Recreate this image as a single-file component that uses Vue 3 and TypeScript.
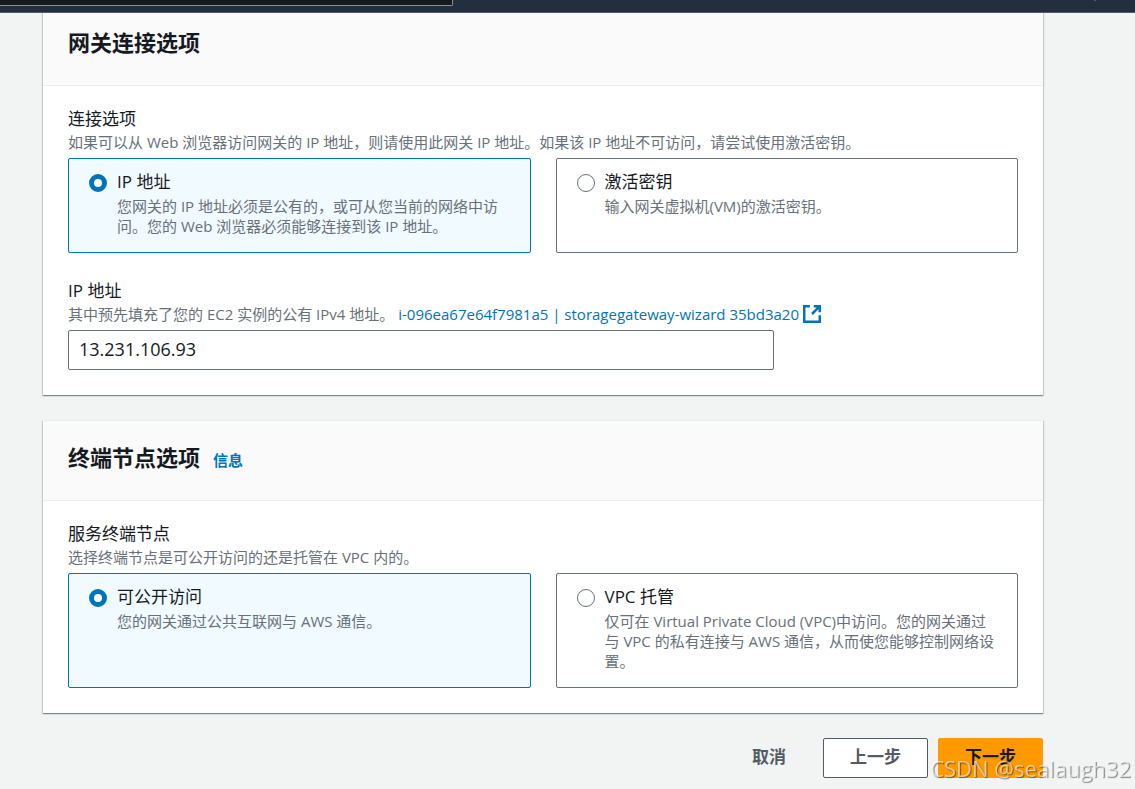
<script setup lang="ts">
import { ref } from 'vue'

interface Tile {
  value: string
  title: string
  description: string
}

const connectionTiles: Tile[] = [
  {
    value: 'ip',
    title: 'IP 地址',
    description: '您网关的 IP 地址必须是公有的，或可从您当前的网络中访问。您的 Web 浏览器必须能够连接到该 IP 地址。',
  },
  { value: 'key', title: '激活密钥', description: '输入网关虚拟机(VM)的激活密钥。' },
]

const endpointTiles: Tile[] = [
  { value: 'public', title: '可公开访问', description: '您的网关通过公共互联网与 AWS 通信。' },
  {
    value: 'vpc',
    title: 'VPC 托管',
    description: '仅可在 Virtual Private Cloud (VPC)中访问。您的网关通过与 VPC 的私有连接与 AWS 通信，从而使您能够控制网络设置。',
  },
]

const connection = ref('ip')
const endpoint = ref('public')
const ipAddress = ref('13.231.106.93')
</script>

<template>
  <div class="page">
    <header class="topbar">
      <div class="search"></div>
      <span class="caret"></span>
    </header>

    <main class="content">
      <section class="card">
        <div class="card-header">
          <h2>网关连接选项</h2>
        </div>
        <div class="card-body">
          <div class="field" role="radiogroup" aria-labelledby="connection-label">
            <span id="connection-label" class="label">连接选项</span>
            <p class="hint">如果可以从 Web 浏览器访问网关的 IP 地址，则请使用此网关 IP 地址。如果该 IP 地址不可访问，请尝试使用激活密钥。</p>
            <div class="tiles">
              <label v-for="tile in connectionTiles" :key="tile.value" class="tile" :class="{ selected: connection === tile.value }">
                <input v-model="connection" type="radio" name="connection" :value="tile.value" />
                <span class="tile-text">
                  <span class="tile-title">{{ tile.title }}</span>
                  <span class="tile-description">{{ tile.description }}</span>
                </span>
              </label>
            </div>
          </div>

          <div class="field">
            <label class="label" for="ip-address">IP 地址</label>
            <p class="hint with-link">
              <span>其中预先填充了您的 EC2 实例的公有 IPv4 地址。</span>
              <a class="link" href="#instance">
                i-096ea67e64f7981a5 | storagegateway-wizard 35bd3a20
                <svg class="external" viewBox="0 0 16 16" aria-hidden="true">
                  <path d="M9.5 1.1h5.4v5.4M14.9 1.1L8 8M14.9 9v5.9H1.1V1.1h5" />
                </svg>
              </a>
            </p>
            <input id="ip-address" v-model="ipAddress" class="text-input" type="text" />
          </div>
        </div>
      </section>

      <section class="card">
        <div class="card-header">
          <h2>终端节点选项</h2>
          <a class="info" href="#info">信息</a>
        </div>
        <div class="card-body">
          <div class="field" role="radiogroup" aria-labelledby="endpoint-label">
            <span id="endpoint-label" class="label">服务终端节点</span>
            <p class="hint">选择终端节点是可公开访问的还是托管在 VPC 内的。</p>
            <div class="tiles">
              <label v-for="tile in endpointTiles" :key="tile.value" class="tile" :class="{ selected: endpoint === tile.value }">
                <input v-model="endpoint" type="radio" name="endpoint" :value="tile.value" />
                <span class="tile-text">
                  <span class="tile-title">{{ tile.title }}</span>
                  <span class="tile-description">{{ tile.description }}</span>
                </span>
              </label>
            </div>
          </div>
        </div>
      </section>

      <div class="actions">
        <button type="button" class="button plain">取消</button>
        <button type="button" class="button">上一步</button>
        <button type="button" class="button primary">下一步</button>
      </div>
    </main>

    <div class="watermark">CSDN @sealaugh32</div>
  </div>
</template>

<style>
body {
  margin: 0;
  background: #f2f3f3;
}
</style>

<style scoped>
.page,
.page * {
  box-sizing: border-box;
}

.page {
  color: #16191f;
  font-family: "Open Sans", "Noto Sans CJK SC", sans-serif;
  font-size: 15px;
  line-height: 20px;
}

.topbar {
  position: fixed;
  inset: 0 0 auto;
  z-index: 2;
  display: flex;
  justify-content: space-between;
  height: 13px;
  padding-right: 39px;
  background: #232f3e;
  border-bottom: 1px solid #535b68;
}

.search {
  flex: 0 1 453px;
  height: 6px;
  background: #16191f;
  border: 1px solid #879596;
  border-width: 0 1px 1px 0;
  border-radius: 0 0 2px 0;
}

.caret {
  width: 2px;
  height: 1px;
  background: #545b64;
}

.content {
  padding: 5px 92px 10px 43px;
}

.card {
  margin-bottom: 25px;
  background: #fff;
  border-top: 1px solid #eaeded;
  box-shadow: 0 1px 1px 0 rgba(0, 28, 36, 0.3), 1px 1px 1px 0 rgba(0, 28, 36, 0.15), -1px 1px 1px 0 rgba(0, 28, 36, 0.15);
}

.card-header {
  display: flex;
  align-items: baseline;
  gap: 13px;
  padding: 21px 25px 28px;
  background: #fafafa;
  border-bottom: 1px solid #eaeded;
}

h2 {
  margin: 0;
  font-size: 22px;
  line-height: 30px;
  font-weight: 700;
}

.info {
  color: #0073bb;
  font-weight: 700;
  text-decoration: none;
}

.card-body {
  display: flex;
  flex-direction: column;
  gap: 25px;
  padding: 20px 25px 25px;
}

.label {
  display: block;
  font-size: 17px;
  line-height: 25px;
}

.hint {
  margin: 1px 0 6px;
  color: #687078;
}

.with-link {
  display: flex;
  gap: 4px;
}

.link {
  display: inline-flex;
  align-items: center;
  gap: 4px;
  color: #0073bb;
  text-decoration: none;
}

.external {
  width: 18px;
  height: 18px;
  fill: none;
  stroke: currentColor;
  stroke-width: 2.2;
}

.tiles {
  display: grid;
  grid-template-columns: 1fr 1fr;
  gap: 25px;
}

.tile {
  display: flex;
  align-items: flex-start;
  gap: 10px;
  padding: 10px 20px 16px;
  border: 1px solid #687078;
  border-radius: 2px;
}

.tile.selected {
  background: #f1faff;
  border-color: #0073bb;
}

.tile input {
  flex: none;
  appearance: none;
  width: 18px;
  height: 18px;
  margin: 5px 0 0;
  background: #fff;
  border: 1px solid #687078;
  border-radius: 50%;
}

.tile input:checked {
  border: 5px solid #0073bb;
}

.tile-title {
  display: block;
  margin-bottom: 2px;
  font-size: 17px;
  line-height: 25px;
}

.tile-description {
  display: block;
  color: #687078;
}

.text-input {
  display: block;
  width: 74.3%;
  height: 40px;
  padding: 0 10px 2px;
  color: #16191f;
  background: #fff;
  border: 1px solid #687078;
  border-radius: 2px;
  font-family: inherit;
  font-size: 18px;
}

.actions {
  display: flex;
  justify-content: flex-end;
  gap: 10px;
}

.button {
  height: 40px;
  padding: 0 26px 6px;
  color: #545b64;
  background: #fff;
  border: 1px solid #545b64;
  border-radius: 2px;
  font-family: inherit;
  font-size: 17px;
  font-weight: 700;
}

.button.plain {
  background: transparent;
  border-color: transparent;
}

.button.primary {
  color: #16191f;
  background: #ff9900;
  border-color: #ff9900;
}

.watermark {
  position: fixed;
  right: 4px;
  bottom: 6px;
  z-index: 3;
  color: rgba(255, 255, 255, 0.6);
  font-size: 22px;
  line-height: 30px;
  text-shadow: 1px 1px 1px rgba(0, 0, 0, 0.45);
  pointer-events: none;
}
</style>
